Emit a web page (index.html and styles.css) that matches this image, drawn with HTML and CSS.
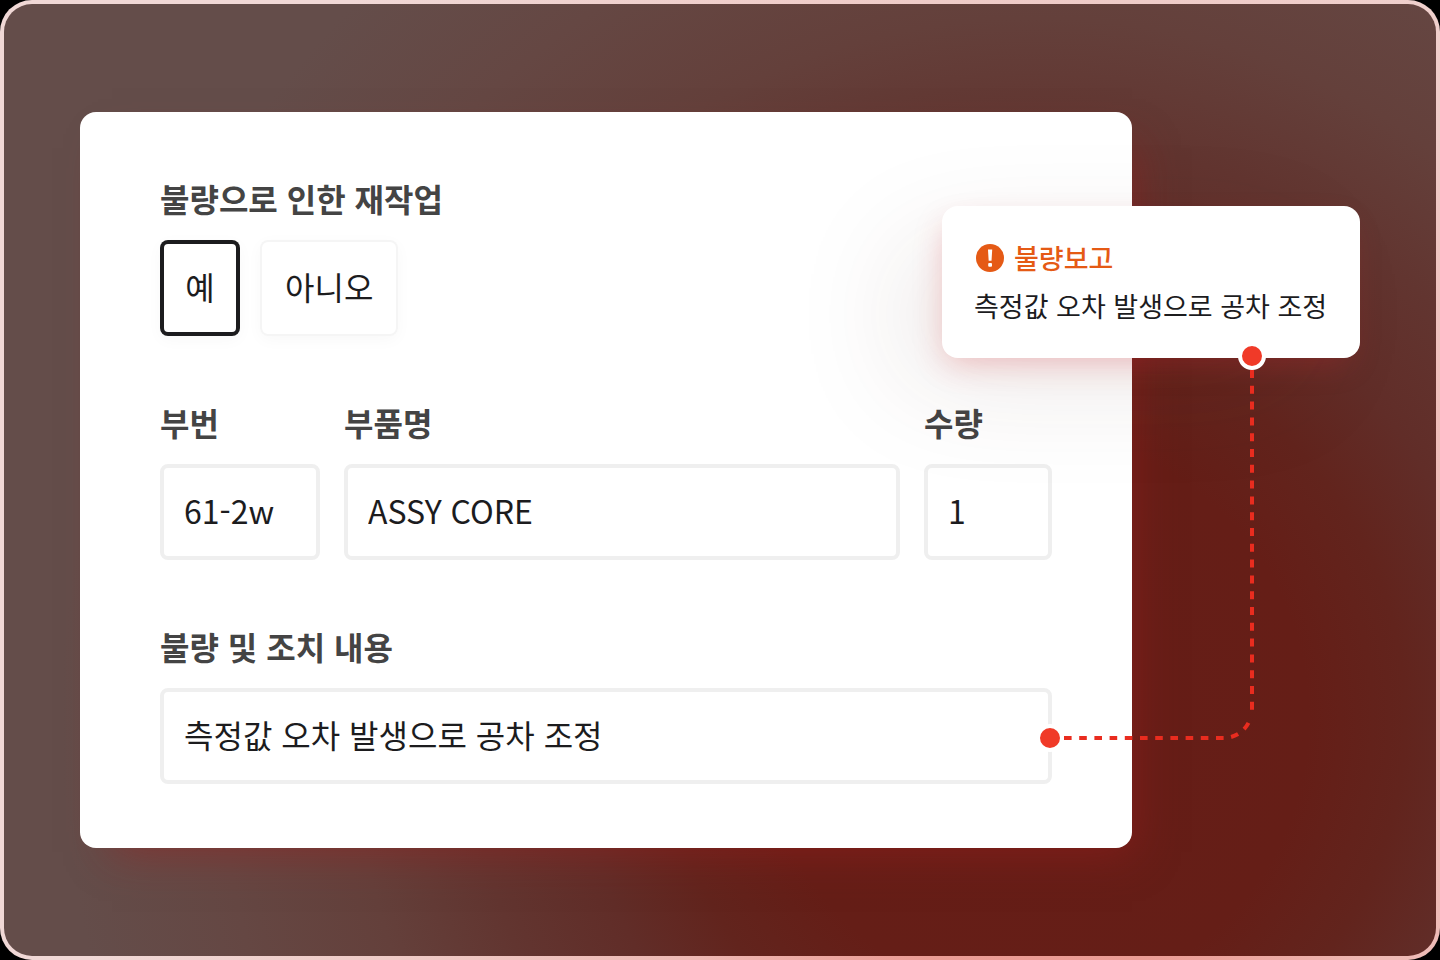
FILE: index.html
```html
<!DOCTYPE html>
<html lang="ko">
<head>
<meta charset="utf-8">
<meta name="viewport" content="width=device-width, initial-scale=1">
<title>불량보고</title>
<link rel="stylesheet" href="styles.css">
</head>
<body>
<main class="stage">
  <form class="panel">
    <fieldset class="group">
      <legend class="label">불량으로 인한 재작업</legend>
      <div class="choices">
        <label class="choice"><input class="choice-input" type="radio" name="rework" value="yes" checked><span class="choice-box">예</span></label>
        <label class="choice"><input class="choice-input" type="radio" name="rework" value="no"><span class="choice-box">아니오</span></label>
      </div>
    </fieldset>
    <div class="row">
      <div class="field">
        <label class="label" for="part-no">부번</label>
        <input class="input" id="part-no" type="text" value="61-2w">
      </div>
      <div class="field">
        <label class="label" for="part-name">부품명</label>
        <input class="input" id="part-name" type="text" value="ASSY CORE">
      </div>
      <div class="field">
        <label class="label" for="quantity">수량</label>
        <input class="input" id="quantity" type="text" inputmode="numeric" value="1">
      </div>
    </div>
    <div class="field">
      <label class="label" for="details">불량 및 조치 내용</label>
      <input class="input" id="details" type="text" value="측정값 오차 발생으로 공차 조정">
    </div>
  </form>

  <aside class="callout">
    <h2 class="callout-title">
      <svg class="callout-icon" viewBox="0 0 28 28" aria-hidden="true">
        <circle cx="14" cy="14" r="14" fill="#e55a15"/>
        <path d="M12 5.5h4.2l-.7 11.2h-2.8z" fill="#fff"/>
        <rect x="12.2" y="19" width="3.8" height="3.8" rx="1" fill="#fff"/>
      </svg>
      불량보고
    </h2>
    <p class="callout-text">측정값 오차 발생으로 공차 조정</p>
  </aside>

  <svg class="connector" viewBox="0 0 232 416" aria-hidden="true">
    <g fill="none" stroke="#e92c1f" stroke-width="4">
      <path d="M216 30V370" stroke-dasharray="8 7.8"/>
      <path d="M28 398H188A28 28 0 0 0 215 376" stroke-dasharray="7.6 7.6"/>
    </g>
    <g fill="#f03a28" stroke="#fff" stroke-width="4">
      <circle cx="216" cy="16" r="12"/>
      <circle cx="14" cy="398" r="12"/>
    </g>
  </svg>
</main>
</body>
</html>
```

FILE: styles.css
```css
*,
*::before,
*::after {
  box-sizing: border-box;
}

body {
  margin: 0;
  background: #000;
  color: #1c1c1e;
  font-family: "Noto Sans CJK KR", "Noto Sans", sans-serif;
  font-size: 32px;
  line-height: 44px;
}

.stage {
  position: relative;
  min-height: 100vh;
  padding: 108px 304px 108px 76px;
  border: 4px solid transparent;
  border-radius: 32px;
  background:
    radial-gradient(68% 105% at 72% 75%, #671d17 0%, #651e17 28%, #62241d 38%, #612d28 47%, #623530 58%, #64403b 70%, #654743 84%, #644d4a 100%) padding-box,
    radial-gradient(68% 105% at 72% 75%, #ea948c 0%, #eb9d96 26%, #eeb9b4 42%, #efcbc7 70%, #f0d8d6 100%) border-box;
}

.panel {
  display: flex;
  flex-direction: column;
  gap: 64px;
  padding: 64px 80px;
  border-radius: 16px;
  background: #fff;
  box-shadow: 16px 20px 40px -16px rgba(160, 30, 30, 0.5);
}

.group {
  min-width: 0;
  margin: 0;
  padding: 0;
  border: 0;
}

.label {
  display: block;
  padding: 0;
  color: #444;
  font-weight: 700;
}

.choices {
  display: flex;
  gap: 20px;
  margin-top: 20px;
}

.choice {
  position: relative;
  min-width: 80px;
  text-align: center;
  cursor: pointer;
}

.choice-input {
  position: absolute;
  inset: 0;
  margin: 0;
  opacity: 0;
}

.choice-box {
  display: block;
  padding: 24px 25px 28px;
  border-radius: 8px;
  background: #fff;
  box-shadow: inset 0 0 0 2px #f5f5f5, 0 4px 16px rgba(0, 0, 0, 0.03);
}

.choice-input:checked + .choice-box {
  box-shadow: inset 0 0 0 4px #1c1c1e, 0 4px 16px rgba(0, 0, 0, 0.03);
}

.row {
  display: grid;
  grid-template-columns: 160px minmax(0, 1fr) 128px;
  gap: 24px;
}

.field {
  display: flex;
  flex-direction: column;
  gap: 20px;
}

.input {
  width: 100%;
  height: 96px;
  padding: 0 20px 4px;
  border: 4px solid #efefef;
  border-radius: 8px;
  background: transparent;
  color: inherit;
  font: inherit;
}

.callout {
  position: absolute;
  top: 202px;
  right: 76px;
  width: 418px;
  padding: 28px 32px;
  border-radius: 16px;
  background: #fff;
  box-shadow: -4px 12px 32px -8px rgba(215, 40, 45, 0.28), -48px 32px 120px -16px rgba(80, 35, 30, 0.13);
  font-size: 27px;
  line-height: 48px;
  white-space: nowrap;
}

.callout-title {
  display: flex;
  align-items: center;
  gap: 10px;
  margin: 0;
  color: #e55a15;
  font-size: inherit;
  font-weight: 500;
}

.callout-icon {
  width: 28px;
  height: 28px;
  margin-left: 2px;
}

.callout-text {
  margin: 0;
}

.connector {
  position: absolute;
  top: 336px;
  right: 168px;
  width: 232px;
  height: 416px;
  pointer-events: none;
}
```
